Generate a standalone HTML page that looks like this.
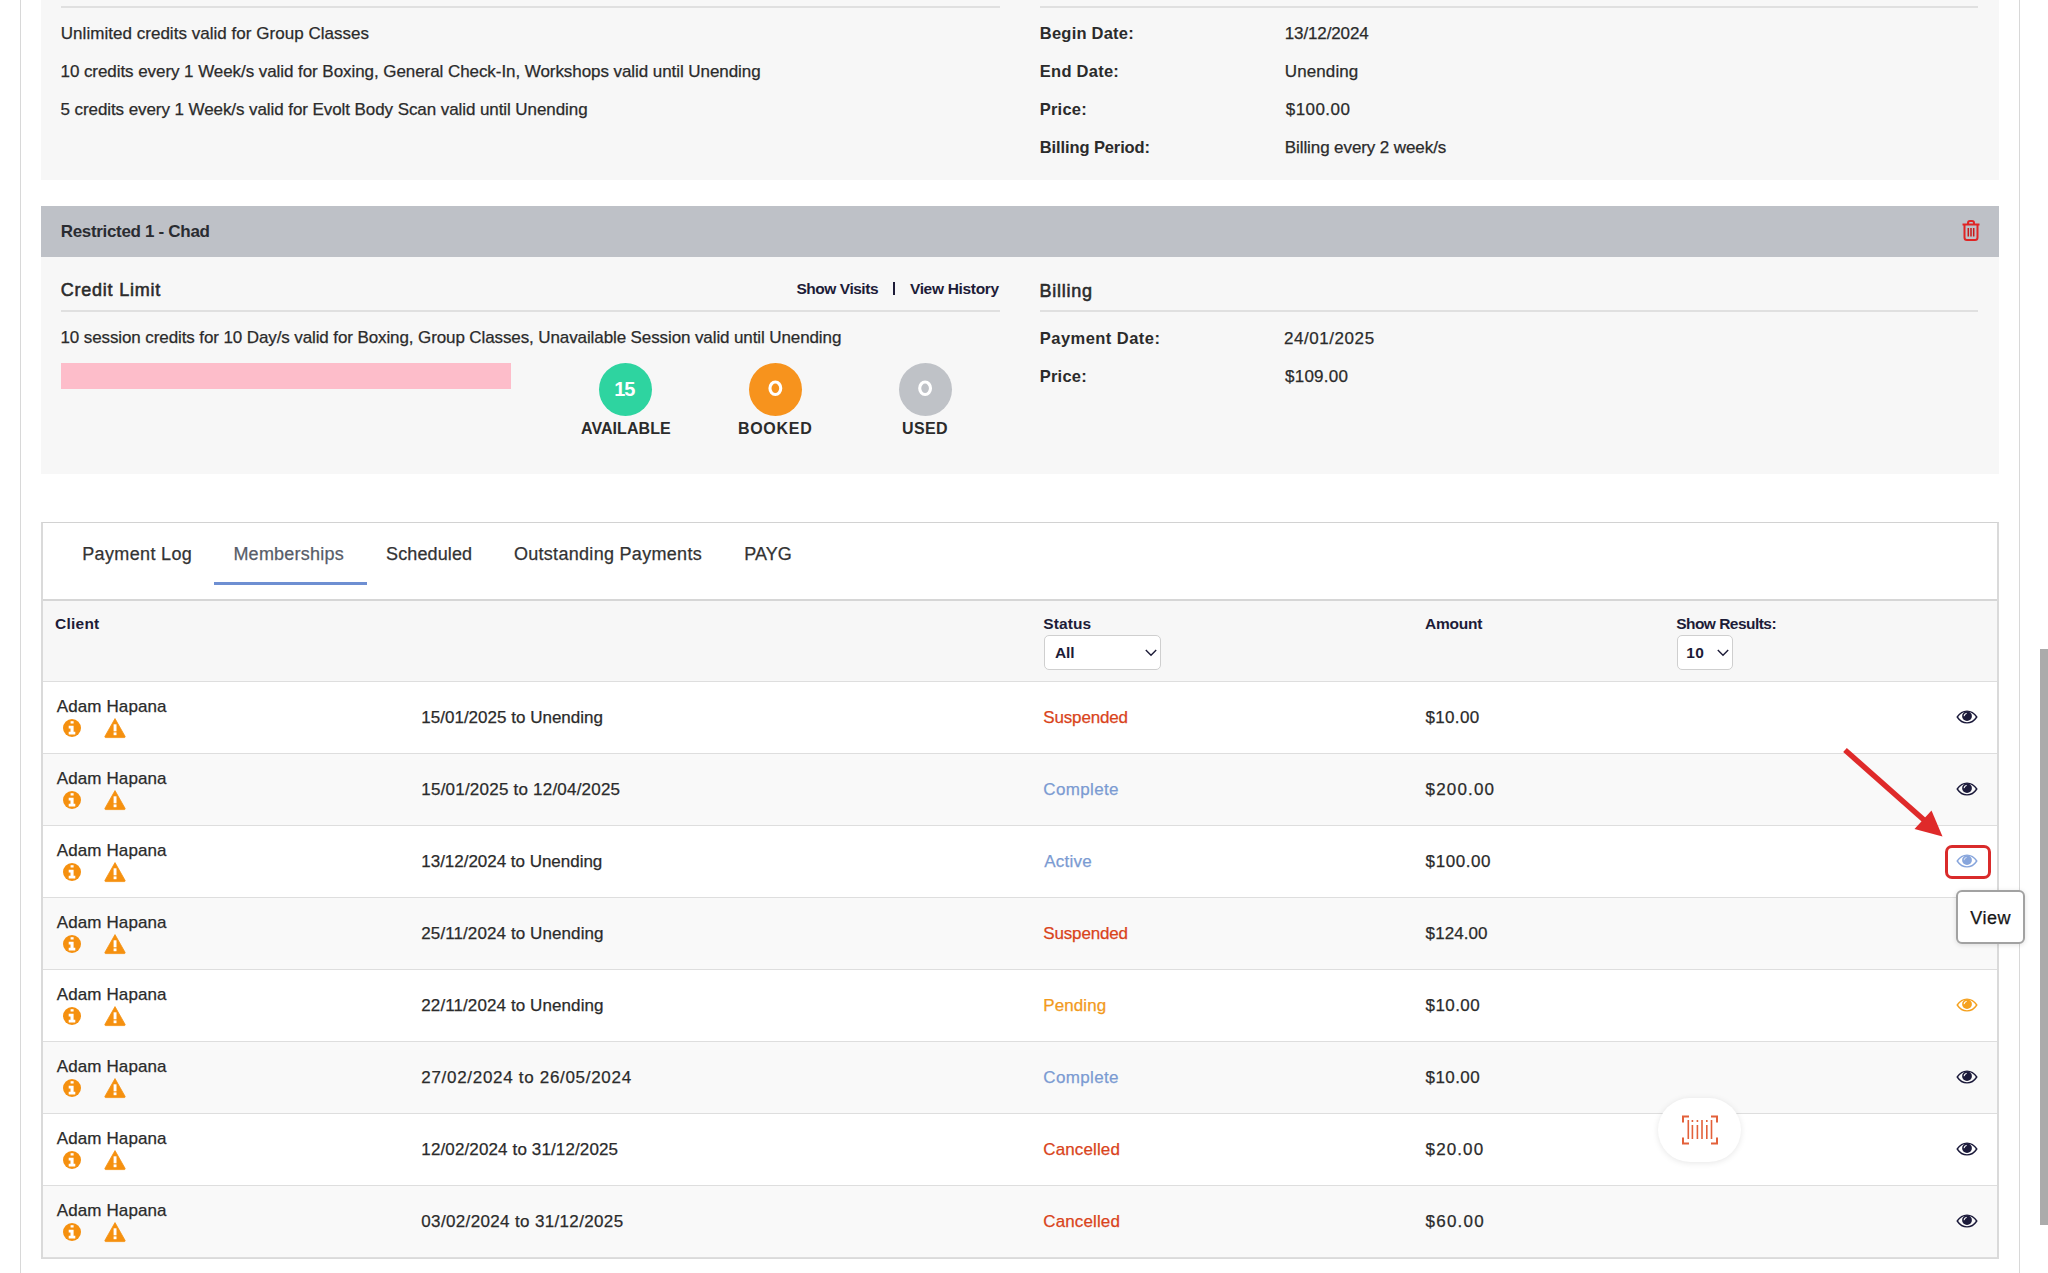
<!DOCTYPE html>
<html><head><meta charset="utf-8"><style>
html,body{margin:0;padding:0;width:2048px;height:1273px;overflow:hidden;background:#fff;}
body{position:relative;font-family:"Liberation Sans", sans-serif;}
.t{position:absolute;white-space:nowrap;}
.r{position:absolute;box-sizing:content-box;}
svg.r{overflow:visible;}
</style></head><body>
<div class="r" style="left:20px;top:0px;width:1px;height:1273px;background:#d8d8d8;"></div>
<div class="r" style="left:2019px;top:0px;width:1px;height:1273px;background:#d8d8d8;"></div>
<div class="r" style="left:2040px;top:649px;width:8px;height:576px;background:#ababab;"></div>
<div class="r" style="left:41px;top:0px;width:1958px;height:180px;background:#f7f7f7;"></div>
<div class="r" style="left:61px;top:6px;width:939px;height:2px;background:#e0e0e0;"></div>
<div class="r" style="left:1040px;top:6px;width:938px;height:2px;background:#e0e0e0;"></div>
<div class="r" style="left:41px;top:206px;width:1958px;height:51px;background:#bec1c7;"></div>
<div class="r" style="left:41px;top:257px;width:1958px;height:217px;background:#f7f7f7;"></div>
<div class="r" style="left:61px;top:310px;width:939px;height:2px;background:#e0e0e0;"></div>
<div class="r" style="left:1040px;top:310px;width:938px;height:2px;background:#e0e0e0;"></div>
<div class="r" style="left:61px;top:363px;width:450px;height:26px;background:#fdbdca;"></div>
<div class="r" style="left:892.5px;top:282px;width:2px;height:13px;background:#1d1c38;"></div>
<div class="r" style="left:598.5px;top:362.5px;width:53px;height:53px;border-radius:50%;background:#2ed4a0"></div>
<div class="r" style="left:748.5px;top:362.5px;width:53px;height:53px;border-radius:50%;background:#f7931d"></div>
<div class="r" style="left:898.5px;top:362.5px;width:53px;height:53px;border-radius:50%;background:#bfc2c7"></div>
<svg class="r" style="left:760px;top:374px" width="30" height="30" viewBox="0 0 30 30"><ellipse cx="15.35" cy="14.3" rx="5.4" ry="6.25" fill="none" stroke="#fff" stroke-width="3.1"/></svg>
<svg class="r" style="left:910px;top:374px" width="30" height="30" viewBox="0 0 30 30"><ellipse cx="15.1" cy="14.3" rx="5.4" ry="6.25" fill="none" stroke="#fff" stroke-width="3.1"/></svg>
<div class="r" style="left:41px;top:522px;width:1954px;height:734px;border:2px solid #dadada;border-top:1px solid #d2d2d2;background:#fff"></div>
<div class="r" style="left:214px;top:582px;width:153px;height:3px;background:#6e8fd2;"></div>
<div class="r" style="left:43px;top:599px;width:1954px;height:2px;background:#d6d6d6;"></div>
<div class="r" style="left:43px;top:601px;width:1954px;height:80px;background:#f7f7f7;"></div>
<div class="r" style="left:43px;top:681px;width:1954px;height:1px;background:#dedede;"></div>
<div class="r" style="left:1044px;top:635px;width:115px;height:33px;border:1px solid #cfcfcf;border-radius:5px;background:#fff"></div>
<svg class="r" style="left:1144.5px;top:649px" width="12" height="8" viewBox="0 0 12 8"><path d="M0.8 1L6 6.3L11.2 1" fill="none" stroke="#1d1c38" stroke-width="1.4"/></svg>
<div class="r" style="left:1677px;top:635px;width:54px;height:33px;border:1px solid #cfcfcf;border-radius:5px;background:#fff"></div>
<svg class="r" style="left:1716.5px;top:649px" width="12" height="8" viewBox="0 0 12 8"><path d="M0.8 1L6 6.3L11.2 1" fill="none" stroke="#1d1c38" stroke-width="1.4"/></svg>
<div class="r" style="left:43px;top:682px;width:1954px;height:71px;background:#ffffff;"></div>
<div class="r" style="left:43px;top:753px;width:1954px;height:1px;background:#dedede;"></div>
<svg class="r" style="left:62.8px;top:719.3px" width="18" height="18" viewBox="0 0 18 18"><circle cx="9" cy="9" r="9" fill="#f5900f"/><rect x="7.6" y="2.2" width="3" height="2.3" fill="#fff"/><path d="M5.7 6.8h4.9v6h1.7v2.6H5.7v-2.6h1.8v-3.4H5.7z" fill="#fff"/></svg>
<svg class="r" style="left:103.5px;top:717.6px" width="22" height="20" viewBox="0 0 22 20"><path d="M11 0.6L21.1 18.4Q21.4 19.4 20.4 19.6H1.6Q0.6 19.4 0.9 18.4Z" fill="#f5900f" stroke="#f5900f" stroke-width="0.8" stroke-linejoin="round"/><rect x="9.6" y="6.3" width="2.9" height="7" fill="#fff"/><rect x="9.6" y="14.4" width="2.9" height="2.8" fill="#fff"/></svg>
<svg class="r" style="left:1954.8px;top:708.8px" width="24" height="16" viewBox="0 0 24 16"><path d="M2.2 8C4.8 4.1 8.1 2.1 12 2.1S19.2 4.1 21.8 8C19.2 11.9 15.9 13.9 12 13.9S4.8 11.9 2.2 8Z" fill="none" stroke="#1b1a3a" stroke-width="1.4" stroke-linejoin="round"/><circle cx="12" cy="7.1" r="4.9" fill="#1b1a3a"/><path d="M9.2 6.8A2.9 2.9 0 0 1 11.2 4.4" fill="none" stroke="#fff" stroke-width="1.1" stroke-linecap="round"/></svg>
<div class="r" style="left:43px;top:754px;width:1954px;height:71px;background:#f9f9f9;"></div>
<div class="r" style="left:43px;top:825px;width:1954px;height:1px;background:#dedede;"></div>
<svg class="r" style="left:62.8px;top:791.3px" width="18" height="18" viewBox="0 0 18 18"><circle cx="9" cy="9" r="9" fill="#f5900f"/><rect x="7.6" y="2.2" width="3" height="2.3" fill="#fff"/><path d="M5.7 6.8h4.9v6h1.7v2.6H5.7v-2.6h1.8v-3.4H5.7z" fill="#fff"/></svg>
<svg class="r" style="left:103.5px;top:789.6px" width="22" height="20" viewBox="0 0 22 20"><path d="M11 0.6L21.1 18.4Q21.4 19.4 20.4 19.6H1.6Q0.6 19.4 0.9 18.4Z" fill="#f5900f" stroke="#f5900f" stroke-width="0.8" stroke-linejoin="round"/><rect x="9.6" y="6.3" width="2.9" height="7" fill="#fff"/><rect x="9.6" y="14.4" width="2.9" height="2.8" fill="#fff"/></svg>
<svg class="r" style="left:1954.8px;top:780.8px" width="24" height="16" viewBox="0 0 24 16"><path d="M2.2 8C4.8 4.1 8.1 2.1 12 2.1S19.2 4.1 21.8 8C19.2 11.9 15.9 13.9 12 13.9S4.8 11.9 2.2 8Z" fill="none" stroke="#1b1a3a" stroke-width="1.4" stroke-linejoin="round"/><circle cx="12" cy="7.1" r="4.9" fill="#1b1a3a"/><path d="M9.2 6.8A2.9 2.9 0 0 1 11.2 4.4" fill="none" stroke="#fff" stroke-width="1.1" stroke-linecap="round"/></svg>
<div class="r" style="left:43px;top:826px;width:1954px;height:71px;background:#ffffff;"></div>
<div class="r" style="left:43px;top:897px;width:1954px;height:1px;background:#dedede;"></div>
<svg class="r" style="left:62.8px;top:863.3px" width="18" height="18" viewBox="0 0 18 18"><circle cx="9" cy="9" r="9" fill="#f5900f"/><rect x="7.6" y="2.2" width="3" height="2.3" fill="#fff"/><path d="M5.7 6.8h4.9v6h1.7v2.6H5.7v-2.6h1.8v-3.4H5.7z" fill="#fff"/></svg>
<svg class="r" style="left:103.5px;top:861.6px" width="22" height="20" viewBox="0 0 22 20"><path d="M11 0.6L21.1 18.4Q21.4 19.4 20.4 19.6H1.6Q0.6 19.4 0.9 18.4Z" fill="#f5900f" stroke="#f5900f" stroke-width="0.8" stroke-linejoin="round"/><rect x="9.6" y="6.3" width="2.9" height="7" fill="#fff"/><rect x="9.6" y="14.4" width="2.9" height="2.8" fill="#fff"/></svg>
<svg class="r" style="left:1954.8px;top:852.8px" width="24" height="16" viewBox="0 0 24 16"><path d="M2.2 8C4.8 4.1 8.1 2.1 12 2.1S19.2 4.1 21.8 8C19.2 11.9 15.9 13.9 12 13.9S4.8 11.9 2.2 8Z" fill="none" stroke="#87a5dc" stroke-width="1.4" stroke-linejoin="round"/><circle cx="12" cy="7.1" r="4.9" fill="#87a5dc"/><path d="M9.2 6.8A2.9 2.9 0 0 1 11.2 4.4" fill="none" stroke="#cfdcf3" stroke-width="1.1" stroke-linecap="round"/></svg>
<div class="r" style="left:43px;top:898px;width:1954px;height:71px;background:#f9f9f9;"></div>
<div class="r" style="left:43px;top:969px;width:1954px;height:1px;background:#dedede;"></div>
<svg class="r" style="left:62.8px;top:935.3px" width="18" height="18" viewBox="0 0 18 18"><circle cx="9" cy="9" r="9" fill="#f5900f"/><rect x="7.6" y="2.2" width="3" height="2.3" fill="#fff"/><path d="M5.7 6.8h4.9v6h1.7v2.6H5.7v-2.6h1.8v-3.4H5.7z" fill="#fff"/></svg>
<svg class="r" style="left:103.5px;top:933.6px" width="22" height="20" viewBox="0 0 22 20"><path d="M11 0.6L21.1 18.4Q21.4 19.4 20.4 19.6H1.6Q0.6 19.4 0.9 18.4Z" fill="#f5900f" stroke="#f5900f" stroke-width="0.8" stroke-linejoin="round"/><rect x="9.6" y="6.3" width="2.9" height="7" fill="#fff"/><rect x="9.6" y="14.4" width="2.9" height="2.8" fill="#fff"/></svg>
<div class="r" style="left:43px;top:970px;width:1954px;height:71px;background:#ffffff;"></div>
<div class="r" style="left:43px;top:1041px;width:1954px;height:1px;background:#dedede;"></div>
<svg class="r" style="left:62.8px;top:1007.3px" width="18" height="18" viewBox="0 0 18 18"><circle cx="9" cy="9" r="9" fill="#f5900f"/><rect x="7.6" y="2.2" width="3" height="2.3" fill="#fff"/><path d="M5.7 6.8h4.9v6h1.7v2.6H5.7v-2.6h1.8v-3.4H5.7z" fill="#fff"/></svg>
<svg class="r" style="left:103.5px;top:1005.6px" width="22" height="20" viewBox="0 0 22 20"><path d="M11 0.6L21.1 18.4Q21.4 19.4 20.4 19.6H1.6Q0.6 19.4 0.9 18.4Z" fill="#f5900f" stroke="#f5900f" stroke-width="0.8" stroke-linejoin="round"/><rect x="9.6" y="6.3" width="2.9" height="7" fill="#fff"/><rect x="9.6" y="14.4" width="2.9" height="2.8" fill="#fff"/></svg>
<svg class="r" style="left:1954.8px;top:996.8px" width="24" height="16" viewBox="0 0 24 16"><path d="M2.2 8C4.8 4.1 8.1 2.1 12 2.1S19.2 4.1 21.8 8C19.2 11.9 15.9 13.9 12 13.9S4.8 11.9 2.2 8Z" fill="none" stroke="#f5a11f" stroke-width="1.4" stroke-linejoin="round"/><circle cx="12" cy="7.1" r="4.9" fill="#f5a11f"/><path d="M9.2 6.8A2.9 2.9 0 0 1 11.2 4.4" fill="none" stroke="#fff" stroke-width="1.1" stroke-linecap="round"/></svg>
<div class="r" style="left:43px;top:1042px;width:1954px;height:71px;background:#f9f9f9;"></div>
<div class="r" style="left:43px;top:1113px;width:1954px;height:1px;background:#dedede;"></div>
<svg class="r" style="left:62.8px;top:1079.3px" width="18" height="18" viewBox="0 0 18 18"><circle cx="9" cy="9" r="9" fill="#f5900f"/><rect x="7.6" y="2.2" width="3" height="2.3" fill="#fff"/><path d="M5.7 6.8h4.9v6h1.7v2.6H5.7v-2.6h1.8v-3.4H5.7z" fill="#fff"/></svg>
<svg class="r" style="left:103.5px;top:1077.6px" width="22" height="20" viewBox="0 0 22 20"><path d="M11 0.6L21.1 18.4Q21.4 19.4 20.4 19.6H1.6Q0.6 19.4 0.9 18.4Z" fill="#f5900f" stroke="#f5900f" stroke-width="0.8" stroke-linejoin="round"/><rect x="9.6" y="6.3" width="2.9" height="7" fill="#fff"/><rect x="9.6" y="14.4" width="2.9" height="2.8" fill="#fff"/></svg>
<svg class="r" style="left:1954.8px;top:1068.8px" width="24" height="16" viewBox="0 0 24 16"><path d="M2.2 8C4.8 4.1 8.1 2.1 12 2.1S19.2 4.1 21.8 8C19.2 11.9 15.9 13.9 12 13.9S4.8 11.9 2.2 8Z" fill="none" stroke="#1b1a3a" stroke-width="1.4" stroke-linejoin="round"/><circle cx="12" cy="7.1" r="4.9" fill="#1b1a3a"/><path d="M9.2 6.8A2.9 2.9 0 0 1 11.2 4.4" fill="none" stroke="#fff" stroke-width="1.1" stroke-linecap="round"/></svg>
<div class="r" style="left:43px;top:1114px;width:1954px;height:71px;background:#ffffff;"></div>
<div class="r" style="left:43px;top:1185px;width:1954px;height:1px;background:#dedede;"></div>
<svg class="r" style="left:62.8px;top:1151.3px" width="18" height="18" viewBox="0 0 18 18"><circle cx="9" cy="9" r="9" fill="#f5900f"/><rect x="7.6" y="2.2" width="3" height="2.3" fill="#fff"/><path d="M5.7 6.8h4.9v6h1.7v2.6H5.7v-2.6h1.8v-3.4H5.7z" fill="#fff"/></svg>
<svg class="r" style="left:103.5px;top:1149.6px" width="22" height="20" viewBox="0 0 22 20"><path d="M11 0.6L21.1 18.4Q21.4 19.4 20.4 19.6H1.6Q0.6 19.4 0.9 18.4Z" fill="#f5900f" stroke="#f5900f" stroke-width="0.8" stroke-linejoin="round"/><rect x="9.6" y="6.3" width="2.9" height="7" fill="#fff"/><rect x="9.6" y="14.4" width="2.9" height="2.8" fill="#fff"/></svg>
<svg class="r" style="left:1954.8px;top:1140.8px" width="24" height="16" viewBox="0 0 24 16"><path d="M2.2 8C4.8 4.1 8.1 2.1 12 2.1S19.2 4.1 21.8 8C19.2 11.9 15.9 13.9 12 13.9S4.8 11.9 2.2 8Z" fill="none" stroke="#1b1a3a" stroke-width="1.4" stroke-linejoin="round"/><circle cx="12" cy="7.1" r="4.9" fill="#1b1a3a"/><path d="M9.2 6.8A2.9 2.9 0 0 1 11.2 4.4" fill="none" stroke="#fff" stroke-width="1.1" stroke-linecap="round"/></svg>
<div class="r" style="left:43px;top:1186px;width:1954px;height:71px;background:#f9f9f9;"></div>
<div class="r" style="left:43px;top:1257px;width:1954px;height:1px;background:#dedede;"></div>
<svg class="r" style="left:62.8px;top:1223.3px" width="18" height="18" viewBox="0 0 18 18"><circle cx="9" cy="9" r="9" fill="#f5900f"/><rect x="7.6" y="2.2" width="3" height="2.3" fill="#fff"/><path d="M5.7 6.8h4.9v6h1.7v2.6H5.7v-2.6h1.8v-3.4H5.7z" fill="#fff"/></svg>
<svg class="r" style="left:103.5px;top:1221.6px" width="22" height="20" viewBox="0 0 22 20"><path d="M11 0.6L21.1 18.4Q21.4 19.4 20.4 19.6H1.6Q0.6 19.4 0.9 18.4Z" fill="#f5900f" stroke="#f5900f" stroke-width="0.8" stroke-linejoin="round"/><rect x="9.6" y="6.3" width="2.9" height="7" fill="#fff"/><rect x="9.6" y="14.4" width="2.9" height="2.8" fill="#fff"/></svg>
<svg class="r" style="left:1954.8px;top:1212.8px" width="24" height="16" viewBox="0 0 24 16"><path d="M2.2 8C4.8 4.1 8.1 2.1 12 2.1S19.2 4.1 21.8 8C19.2 11.9 15.9 13.9 12 13.9S4.8 11.9 2.2 8Z" fill="none" stroke="#1b1a3a" stroke-width="1.4" stroke-linejoin="round"/><circle cx="12" cy="7.1" r="4.9" fill="#1b1a3a"/><path d="M9.2 6.8A2.9 2.9 0 0 1 11.2 4.4" fill="none" stroke="#fff" stroke-width="1.1" stroke-linecap="round"/></svg>
<svg class="r" style="left:1960px;top:218px" width="22" height="24" viewBox="0 0 22 24">
<g fill="none" stroke="#e02424" stroke-width="2">
<path d="M2.5 6.5h17"/><path d="M8 6.5V5a2 2 0 0 1 2-2h2a2 2 0 0 1 2 2v1.5"/>
<path d="M4.5 7v12.5a2.5 2.5 0 0 0 2.5 2.5h8a2.5 2.5 0 0 0 2.5-2.5V7"/>
</g>
<g stroke="#c81818" stroke-width="1.5"><path d="M8.3 10v8.5M11 10v8.5M13.7 10v8.5"/></g>
</svg>
<div class="t" style="left:60.80px;top:24.61px;font-size:17px;line-height:17px;font-weight:400;color:#2b2b2b;letter-spacing:0.030px;-webkit-text-stroke:0.25px currentColor;">Unlimited credits valid for Group Classes</div>
<div class="t" style="left:60.50px;top:63.21px;font-size:17px;line-height:17px;font-weight:400;color:#2b2b2b;letter-spacing:-0.066px;-webkit-text-stroke:0.25px currentColor;">10 credits every 1 Week/s valid for Boxing, General Check-In, Workshops valid until Unending</div>
<div class="t" style="left:60.50px;top:101.21px;font-size:17px;line-height:17px;font-weight:400;color:#2b2b2b;letter-spacing:-0.079px;-webkit-text-stroke:0.25px currentColor;">5 credits every 1 Week/s valid for Evolt Body Scan valid until Unending</div>
<div class="t" style="left:1039.80px;top:25.03px;font-size:16.5px;line-height:16.5px;font-weight:700;color:#2b2b2b;letter-spacing:0.220px;">Begin Date:</div>
<div class="t" style="left:1284.80px;top:24.61px;font-size:17px;line-height:17px;font-weight:400;color:#2b2b2b;letter-spacing:-0.133px;-webkit-text-stroke:0.25px currentColor;">13/12/2024</div>
<div class="t" style="left:1039.80px;top:63.23px;font-size:16.5px;line-height:16.5px;font-weight:700;color:#2b2b2b;letter-spacing:0.250px;">End Date:</div>
<div class="t" style="left:1284.80px;top:62.81px;font-size:17px;line-height:17px;font-weight:400;color:#2b2b2b;letter-spacing:0.100px;-webkit-text-stroke:0.25px currentColor;">Unending</div>
<div class="t" style="left:1039.80px;top:101.23px;font-size:16.5px;line-height:16.5px;font-weight:700;color:#2b2b2b;letter-spacing:0.200px;">Price:</div>
<div class="t" style="left:1285.80px;top:100.81px;font-size:17px;line-height:17px;font-weight:400;color:#2b2b2b;letter-spacing:0.433px;-webkit-text-stroke:0.25px currentColor;">$100.00</div>
<div class="t" style="left:1039.80px;top:139.03px;font-size:16.5px;line-height:16.5px;font-weight:700;color:#2b2b2b;letter-spacing:-0.114px;">Billing Period:</div>
<div class="t" style="left:1284.80px;top:138.61px;font-size:17px;line-height:17px;font-weight:400;color:#2b2b2b;letter-spacing:-0.095px;-webkit-text-stroke:0.25px currentColor;">Billing every 2 week/s</div>
<div class="t" style="left:60.70px;top:223.21px;font-size:17px;line-height:17px;font-weight:700;color:#2a2c31;letter-spacing:-0.317px;">Restricted 1 - Chad</div>
<div class="t" style="left:60.70px;top:281.46px;font-size:18px;line-height:18px;font-weight:400;color:#2b2b2b;letter-spacing:0.782px;-webkit-text-stroke:0.55px currentColor;">Credit Limit</div>
<div class="t" style="left:796.50px;top:280.78px;font-size:15.5px;line-height:15.5px;font-weight:700;color:#1d1c38;letter-spacing:-0.470px;">Show Visits</div>
<div class="t" style="left:909.90px;top:280.78px;font-size:15.5px;line-height:15.5px;font-weight:700;color:#1d1c38;letter-spacing:-0.318px;">View History</div>
<div class="t" style="left:1039.50px;top:282.06px;font-size:18px;line-height:18px;font-weight:400;color:#2b2b2b;letter-spacing:0.750px;-webkit-text-stroke:0.55px currentColor;">Billing</div>
<div class="t" style="left:60.50px;top:329.01px;font-size:17px;line-height:17px;font-weight:400;color:#2b2b2b;letter-spacing:-0.106px;-webkit-text-stroke:0.25px currentColor;">10 session credits for 10 Day/s valid for Boxing, Group Classes, Unavailable Session valid until Unending</div>
<div class="t" style="left:1039.80px;top:330.03px;font-size:16.5px;line-height:16.5px;font-weight:700;color:#2b2b2b;letter-spacing:0.458px;">Payment Date:</div>
<div class="t" style="left:1284.00px;top:329.61px;font-size:17px;line-height:17px;font-weight:400;color:#2b2b2b;letter-spacing:0.556px;-webkit-text-stroke:0.25px currentColor;">24/01/2025</div>
<div class="t" style="left:1039.80px;top:368.03px;font-size:16.5px;line-height:16.5px;font-weight:700;color:#2b2b2b;letter-spacing:0.200px;">Price:</div>
<div class="t" style="left:1285.00px;top:367.61px;font-size:17px;line-height:17px;font-weight:400;color:#2b2b2b;letter-spacing:0.250px;-webkit-text-stroke:0.25px currentColor;">$109.00</div>
<div class="t" style="left:614.20px;top:378.77px;font-size:20px;line-height:20px;font-weight:700;color:#fff;letter-spacing:-1.000px;">15</div>
<div class="t" style="left:581.00px;top:420.86px;font-size:16px;line-height:16px;font-weight:700;color:#2b2b2b;letter-spacing:0.062px;">AVAILABLE</div>
<div class="t" style="left:737.90px;top:420.86px;font-size:16px;line-height:16px;font-weight:700;color:#2b2b2b;letter-spacing:0.720px;">BOOKED</div>
<div class="t" style="left:902.00px;top:420.86px;font-size:16px;line-height:16px;font-weight:700;color:#2b2b2b;letter-spacing:0.333px;">USED</div>
<div class="t" style="left:82.20px;top:545.26px;font-size:18px;line-height:18px;font-weight:400;color:#333333;letter-spacing:0.360px;-webkit-text-stroke:0.25px currentColor;">Payment Log</div>
<div class="t" style="left:233.40px;top:545.26px;font-size:18px;line-height:18px;font-weight:400;color:#575c68;letter-spacing:0.240px;-webkit-text-stroke:0.25px currentColor;">Memberships</div>
<div class="t" style="left:386.00px;top:545.26px;font-size:18px;line-height:18px;font-weight:400;color:#333333;letter-spacing:0.125px;-webkit-text-stroke:0.25px currentColor;">Scheduled</div>
<div class="t" style="left:513.90px;top:545.26px;font-size:18px;line-height:18px;font-weight:400;color:#333333;letter-spacing:0.300px;-webkit-text-stroke:0.25px currentColor;">Outstanding Payments</div>
<div class="t" style="left:744.30px;top:545.26px;font-size:18px;line-height:18px;font-weight:400;color:#333333;letter-spacing:0.000px;-webkit-text-stroke:0.25px currentColor;">PAYG</div>
<div class="t" style="left:55.00px;top:615.88px;font-size:15.5px;line-height:15.5px;font-weight:700;color:#1d1c38;letter-spacing:0.240px;">Client</div>
<div class="t" style="left:1043.30px;top:615.88px;font-size:15.5px;line-height:15.5px;font-weight:700;color:#1d1c38;letter-spacing:0.080px;">Status</div>
<div class="t" style="left:1425.00px;top:615.88px;font-size:15.5px;line-height:15.5px;font-weight:700;color:#1d1c38;letter-spacing:-0.220px;">Amount</div>
<div class="t" style="left:1676.20px;top:615.88px;font-size:15.5px;line-height:15.5px;font-weight:700;color:#1d1c38;letter-spacing:-0.533px;">Show Results:</div>
<div class="t" style="left:1055.10px;top:644.88px;font-size:15.5px;line-height:15.5px;font-weight:700;color:#1d1c38;letter-spacing:-0.200px;">All</div>
<div class="t" style="left:1686.30px;top:644.88px;font-size:15.5px;line-height:15.5px;font-weight:700;color:#1d1c38;letter-spacing:0.400px;">10</div>
<div class="t" style="left:56.70px;top:697.61px;font-size:17px;line-height:17px;font-weight:400;color:#2b2b2b;letter-spacing:0.120px;-webkit-text-stroke:0.25px currentColor;">Adam Hapana</div>
<div class="t" style="left:421.30px;top:709.21px;font-size:17px;line-height:17px;font-weight:400;color:#2b2b2b;letter-spacing:0.010px;-webkit-text-stroke:0.25px currentColor;">15/01/2025 to Unending</div>
<div class="t" style="left:1043.30px;top:708.61px;font-size:17px;line-height:17px;font-weight:400;color:#d9441b;letter-spacing:-0.162px;-webkit-text-stroke:0.25px currentColor;">Suspended</div>
<div class="t" style="left:1425.60px;top:708.61px;font-size:17px;line-height:17px;font-weight:400;color:#2b2b2b;letter-spacing:0.300px;-webkit-text-stroke:0.25px currentColor;">$10.00</div>
<div class="t" style="left:56.70px;top:769.61px;font-size:17px;line-height:17px;font-weight:400;color:#2b2b2b;letter-spacing:0.120px;-webkit-text-stroke:0.25px currentColor;">Adam Hapana</div>
<div class="t" style="left:421.30px;top:781.21px;font-size:17px;line-height:17px;font-weight:400;color:#2b2b2b;letter-spacing:0.217px;-webkit-text-stroke:0.25px currentColor;">15/01/2025 to 12/04/2025</div>
<div class="t" style="left:1043.30px;top:780.61px;font-size:17px;line-height:17px;font-weight:400;color:#7b9bd2;letter-spacing:0.357px;-webkit-text-stroke:0.25px currentColor;">Complete</div>
<div class="t" style="left:1425.60px;top:780.61px;font-size:17px;line-height:17px;font-weight:400;color:#2b2b2b;letter-spacing:1.167px;-webkit-text-stroke:0.25px currentColor;">$200.00</div>
<div class="t" style="left:56.70px;top:841.61px;font-size:17px;line-height:17px;font-weight:400;color:#2b2b2b;letter-spacing:0.120px;-webkit-text-stroke:0.25px currentColor;">Adam Hapana</div>
<div class="t" style="left:421.30px;top:853.21px;font-size:17px;line-height:17px;font-weight:400;color:#2b2b2b;letter-spacing:-0.024px;-webkit-text-stroke:0.25px currentColor;">13/12/2024 to Unending</div>
<div class="t" style="left:1044.30px;top:852.61px;font-size:17px;line-height:17px;font-weight:400;color:#7b9bd2;letter-spacing:0.200px;-webkit-text-stroke:0.25px currentColor;">Active</div>
<div class="t" style="left:1425.60px;top:852.61px;font-size:17px;line-height:17px;font-weight:400;color:#2b2b2b;letter-spacing:0.583px;-webkit-text-stroke:0.25px currentColor;">$100.00</div>
<div class="t" style="left:56.70px;top:913.61px;font-size:17px;line-height:17px;font-weight:400;color:#2b2b2b;letter-spacing:0.120px;-webkit-text-stroke:0.25px currentColor;">Adam Hapana</div>
<div class="t" style="left:421.30px;top:925.21px;font-size:17px;line-height:17px;font-weight:400;color:#2b2b2b;letter-spacing:0.095px;-webkit-text-stroke:0.25px currentColor;">25/11/2024 to Unending</div>
<div class="t" style="left:1043.30px;top:924.61px;font-size:17px;line-height:17px;font-weight:400;color:#d9441b;letter-spacing:-0.162px;-webkit-text-stroke:0.25px currentColor;">Suspended</div>
<div class="t" style="left:1425.60px;top:924.61px;font-size:17px;line-height:17px;font-weight:400;color:#2b2b2b;letter-spacing:0.083px;-webkit-text-stroke:0.25px currentColor;">$124.00</div>
<div class="t" style="left:56.70px;top:985.61px;font-size:17px;line-height:17px;font-weight:400;color:#2b2b2b;letter-spacing:0.120px;-webkit-text-stroke:0.25px currentColor;">Adam Hapana</div>
<div class="t" style="left:421.30px;top:997.21px;font-size:17px;line-height:17px;font-weight:400;color:#2b2b2b;letter-spacing:0.095px;-webkit-text-stroke:0.25px currentColor;">22/11/2024 to Unending</div>
<div class="t" style="left:1043.30px;top:996.61px;font-size:17px;line-height:17px;font-weight:400;color:#f29a1c;letter-spacing:0.083px;-webkit-text-stroke:0.25px currentColor;">Pending</div>
<div class="t" style="left:1425.60px;top:996.61px;font-size:17px;line-height:17px;font-weight:400;color:#2b2b2b;letter-spacing:0.400px;-webkit-text-stroke:0.25px currentColor;">$10.00</div>
<div class="t" style="left:56.70px;top:1057.61px;font-size:17px;line-height:17px;font-weight:400;color:#2b2b2b;letter-spacing:0.120px;-webkit-text-stroke:0.25px currentColor;">Adam Hapana</div>
<div class="t" style="left:421.30px;top:1069.21px;font-size:17px;line-height:17px;font-weight:400;color:#2b2b2b;letter-spacing:0.696px;-webkit-text-stroke:0.25px currentColor;">27/02/2024 to 26/05/2024</div>
<div class="t" style="left:1043.30px;top:1068.61px;font-size:17px;line-height:17px;font-weight:400;color:#7b9bd2;letter-spacing:0.357px;-webkit-text-stroke:0.25px currentColor;">Complete</div>
<div class="t" style="left:1425.60px;top:1068.61px;font-size:17px;line-height:17px;font-weight:400;color:#2b2b2b;letter-spacing:0.400px;-webkit-text-stroke:0.25px currentColor;">$10.00</div>
<div class="t" style="left:56.70px;top:1129.61px;font-size:17px;line-height:17px;font-weight:400;color:#2b2b2b;letter-spacing:0.120px;-webkit-text-stroke:0.25px currentColor;">Adam Hapana</div>
<div class="t" style="left:421.30px;top:1141.21px;font-size:17px;line-height:17px;font-weight:400;color:#2b2b2b;letter-spacing:0.130px;-webkit-text-stroke:0.25px currentColor;">12/02/2024 to 31/12/2025</div>
<div class="t" style="left:1043.30px;top:1140.61px;font-size:17px;line-height:17px;font-weight:400;color:#d9441b;letter-spacing:0.125px;-webkit-text-stroke:0.25px currentColor;">Cancelled</div>
<div class="t" style="left:1425.60px;top:1140.61px;font-size:17px;line-height:17px;font-weight:400;color:#2b2b2b;letter-spacing:1.100px;-webkit-text-stroke:0.25px currentColor;">$20.00</div>
<div class="t" style="left:56.70px;top:1201.61px;font-size:17px;line-height:17px;font-weight:400;color:#2b2b2b;letter-spacing:0.120px;-webkit-text-stroke:0.25px currentColor;">Adam Hapana</div>
<div class="t" style="left:421.30px;top:1213.21px;font-size:17px;line-height:17px;font-weight:400;color:#2b2b2b;letter-spacing:0.348px;-webkit-text-stroke:0.25px currentColor;">03/02/2024 to 31/12/2025</div>
<div class="t" style="left:1043.30px;top:1212.61px;font-size:17px;line-height:17px;font-weight:400;color:#d9441b;letter-spacing:0.125px;-webkit-text-stroke:0.25px currentColor;">Cancelled</div>
<div class="t" style="left:1425.60px;top:1212.61px;font-size:17px;line-height:17px;font-weight:400;color:#2b2b2b;letter-spacing:1.200px;-webkit-text-stroke:0.25px currentColor;">$60.00</div>
<div class="r" style="left:1945px;top:845px;width:40px;height:28px;border:3px solid #d92b2b;border-radius:7px"></div>
<svg class="r" style="left:1830px;top:740px" width="120" height="105" viewBox="0 0 120 105">
<path d="M15 10L94 80" stroke="#df2a2a" stroke-width="5.5" stroke-linecap="butt"/>
<path d="M112.5 96.5L84.5 89L101.5 70.5Z" fill="#df2a2a"/></svg>
<div class="r" style="left:1956px;top:890px;width:65px;height:50px;border:2px solid #a2a2a2;border-radius:6px;background:#fff;box-shadow:0 1px 5px rgba(0,0,0,0.12)"></div>
<div class="t" style="left:1970.30px;top:908.76px;font-size:18px;line-height:18px;font-weight:400;color:#161616;letter-spacing:0.467px;-webkit-text-stroke:0.25px currentColor;">View</div>
<div class="r" style="left:1658px;top:1098px;width:83px;height:64px;border-radius:32px;background:#fff;box-shadow:0 1px 6px rgba(0,0,0,0.10)"></div>
<svg class="r" style="left:1680px;top:1114px" width="40" height="32" viewBox="0 0 40 32">
<g fill="none" stroke="#e3613b" stroke-width="2"><path d="M9 2.5H3V8.5"/><path d="M31 2.5H37V8.5"/><path d="M3 23.5V29.5H9"/><path d="M37 23.5V29.5H31"/></g>
<g fill="#e3613b"><rect x="7.5" y="6" width="1.6" height="19"/><rect x="11.6" y="6" width="1.6" height="2"/><rect x="11.6" y="11" width="1.6" height="14"/>
<rect x="16.6" y="6" width="1.6" height="2"/><rect x="16.6" y="11" width="1.6" height="14"/><rect x="21.2" y="6" width="1.6" height="19"/>
<rect x="26" y="6" width="1.6" height="2"/><rect x="26" y="11" width="1.6" height="14"/><rect x="30.7" y="6" width="1.6" height="19"/></g></svg>
</body></html>
